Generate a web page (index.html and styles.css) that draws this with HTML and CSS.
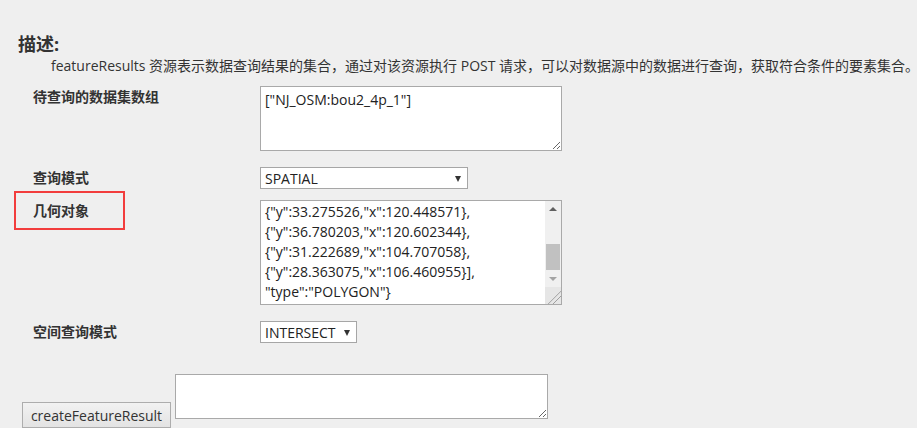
FILE: index.html
```html
<!DOCTYPE html>
<html>
  <head>
    <meta charset="utf-8">
    <title>featureResults</title>
    <link rel="stylesheet" href="styles.css">
  </head>
  <body>
    <div class="page">
      <h3 class="desc-title">描述:</h3>
      <p class="desc-text">featureResults 资源表示数据查询结果的集合，通过对该资源执行 POST 请求，可以对数据源中的数据进行查询，获取符合条件的要素集合。</p>

      <form class="params">
        <label class="param-label" for="datasetNames">待查询的数据集数组</label>
        <textarea id="datasetNames" class="param-area">["NJ_OSM:bou2_4p_1"]</textarea>

        <label class="param-label" for="queryMode">查询模式</label>
        <span class="select-wrap wide">
          <select id="queryMode" class="param-select">
            <option>SPATIAL</option>
          </select>
        </span>

        <label class="param-label marked" for="geometry">几何对象</label>
        <div class="fake-area" id="geometry">
          <div class="fake-text">
            <div>{"y":33.275526,"x":120.448571},</div>
            <div>{"y":36.780203,"x":120.602344},</div>
            <div>{"y":31.222689,"x":104.707058},</div>
            <div>{"y":28.363075,"x":106.460955}],</div>
            <div>"type":"POLYGON"}</div>
          </div>
          <div class="fake-scroll">
            <span class="arrow up"></span>
            <span class="track"><span class="thumb"></span></span>
            <span class="arrow down"></span>
            <span class="corner"></span>
          </div>
        </div>

        <label class="param-label" for="spatialMode">空间查询模式</label>
        <span class="select-wrap narrow">
          <select id="spatialMode" class="param-select">
            <option>INTERSECT</option>
          </select>
        </span>
      </form>

      <div class="submit-row">
        <button type="button" class="submit-btn">createFeatureResult</button>
        <textarea class="result-area"></textarea>
      </div>
    </div>
  </body>
</html>
```

FILE: styles.css
```css
body {
  margin: 0;
  background: #efefef;
  color: #333;
  font-family: "Open Sans", "Noto Sans CJK SC", sans-serif;
  font-size: 14px;
}

.page {
  padding: 32px 0 0 18px;
}

.desc-title {
  margin: 0;
  font-size: 18px;
  line-height: 24px;
  font-weight: bold;
}

.desc-text {
  margin: 0 0 10px 0;
  padding-left: 33px;
  line-height: 20px;
  white-space: nowrap;
}

.params {
  display: grid;
  grid-template-columns: 227px auto;
  row-gap: 11px;
  margin-left: 15px;
  justify-items: start;
}

.param-label {
  font-weight: bold;
  line-height: 22px;
  position: relative;
}

.param-label.marked::after {
  content: "";
  position: absolute;
  left: -19px;
  top: -9px;
  width: 107px;
  height: 35px;
  border: 2px solid #f23d3d;
}

.param-area,
.result-area {
  display: block;
  box-sizing: border-box;
  background: #fff;
  border: 1px solid #a9a9a9;
  color: #222;
  font-family: inherit;
  font-size: 14px;
  margin: 0;
}

.param-area {
  width: 302px;
  height: 65px;
  margin-bottom: 5px;
  padding: 2px 4px;
  line-height: 22px;
}

.select-wrap {
  position: relative;
  display: block;
}

.select-wrap::after {
  content: "";
  position: absolute;
  right: 7px;
  top: 9px;
  border-left: 3px solid transparent;
  border-right: 3px solid transparent;
  border-top: 6px solid #333;
}

.param-select {
  appearance: none;
  -webkit-appearance: none;
  box-sizing: border-box;
  height: 22px;
  border: 1px solid #a6a6a6;
  border-radius: 0;
  background: #fff;
  color: #222;
  font-family: inherit;
  font-size: 14px;
  padding: 0 0 0 4px;
  margin: 0;
}

.wide .param-select {
  width: 208px;
}

.narrow .param-select {
  width: 97px;
}

.fake-area {
  display: flex;
  box-sizing: border-box;
  width: 302px;
  height: 105px;
  margin-bottom: 5px;
  background: #fff;
  border: 1px solid #a9a9a9;
}

.fake-text {
  flex: 1;
  padding: 1px 4px;
  line-height: 20px;
  color: #222;
  overflow: hidden;
  white-space: nowrap;
}

.fake-scroll {
  width: 16px;
  display: flex;
  flex-direction: column;
  background: #f0f0f0;
}

.arrow {
  height: 16px;
  position: relative;
}

.arrow::after {
  content: "";
  position: absolute;
  left: 4px;
  top: 6px;
  border-left: 4px solid transparent;
  border-right: 4px solid transparent;
}

.arrow.up::after {
  border-bottom: 4px solid #606060;
}

.arrow.down::after {
  border-top: 4px solid #a3a3a3;
}

.track {
  flex: 1;
  padding-top: 27px;
}

.thumb {
  display: block;
  height: 26px;
  margin: 0 1px;
  background: #c1c1c1;
}

.corner {
  height: 17px;
  background: #e6e6e6 linear-gradient(135deg, transparent 60%, #888 61%, transparent 64%, transparent 74%, #888 75%, transparent 78%);
}

.submit-row {
  display: flex;
  align-items: flex-end;
  gap: 4px;
  margin: 31px 0 0 4px;
}

.submit-btn {
  box-sizing: border-box;
  width: 149px;
  height: 26px;
  padding: 0 4px;
  border: 1px solid #adadad;
  background: linear-gradient(#f2f2f2, #e3e3e3);
  color: #333;
  font-family: inherit;
  font-size: 14px;
  margin: 0;
  white-space: nowrap;
}

.result-area {
  width: 373px;
  height: 45px;
  margin-bottom: 9px;
}
```
